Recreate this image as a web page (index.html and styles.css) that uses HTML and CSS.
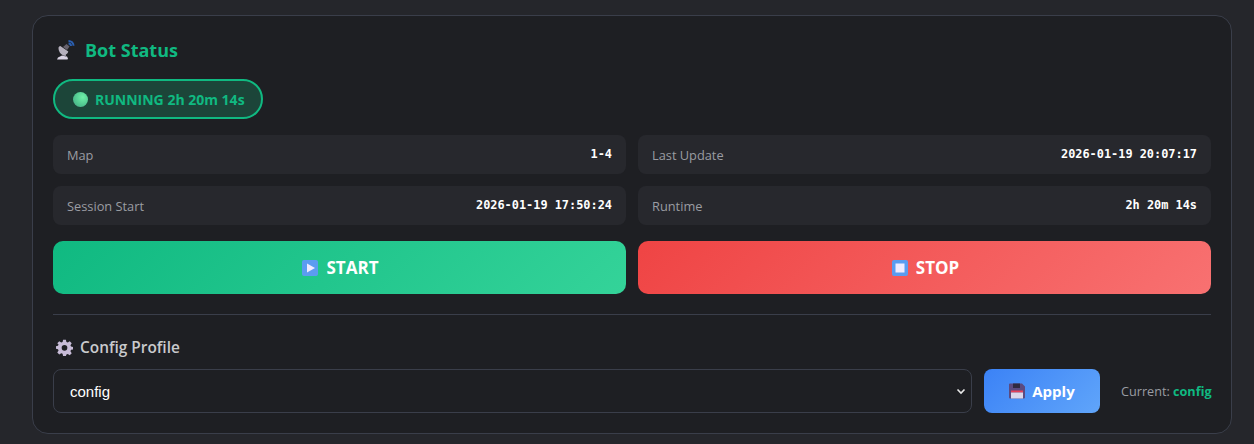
FILE: index.html
```html
<!DOCTYPE html>
<html lang="en">
<head>
<meta charset="utf-8">
<title>Bot Status</title>
<link rel="stylesheet" href="styles.css">
</head>
<body>
<main class="card">
  <h2 class="title">
    <svg class="title-icon" viewBox="0 0 20 20" width="20" height="20" aria-hidden="true">
      <path d="M1 19.500l1-2 4-2 5 1 1 2-.5 1z" fill="#d9d3e3"/>
      <path d="M6 15l2-3 2 1 0 4z" fill="#8f8a99"/>
      <path d="M2.500 8c0-1 .8-2 1.800-2l8 5.500c-.6 2.500-3 4-5 3.500-2.500-.5-4.800-3.500-4.800-7z" fill="#b5b0bd"/>
      <path d="M7 7l3.500-3 3 2.500-2.500 3.500z" fill="#66626e"/>
      <path d="M12.500 1c2.800 0 5 2 5 4.800M12.500 3.500c1.300 0 2.500 1 2.500 2.500" fill="none" stroke="#2b5fb0" stroke-width="2"/>
    </svg>
    <span>Bot Status</span>
  </h2>
  <div class="pill"><span class="dot"></span><span>RUNNING 2h 20m 14s</span></div>
  <div class="grid">
    <div class="stat"><span class="label">Map</span><span class="value">1-4</span></div>
    <div class="stat"><span class="label">Last Update</span><span class="value">2026-01-19 20:07:17</span></div>
    <div class="stat"><span class="label">Session Start</span><span class="value">2026-01-19 17:50:24</span></div>
    <div class="stat"><span class="label">Runtime</span><span class="value">2h 20m 14s</span></div>
  </div>
  <div class="actions">
    <button class="action start"><span class="key"><svg viewBox="0 0 16 16" width="16" height="16" aria-hidden="true"><path d="M5 3.500l8 4.500-8 4.500z" fill="#f0ebff"/></svg></span>START</button>
    <button class="action stop"><span class="key"><svg viewBox="0 0 16 16" width="16" height="16" aria-hidden="true"><rect x="3.500" y="3.500" width="9" height="9" fill="#f0ebff"/></svg></span>STOP</button>
  </div>
  <hr class="divider">
  <h3 class="profile-title">
    <svg viewBox="0 0 24 24" width="17" height="17" aria-hidden="true"><path fill="#c8bcd8" fill-rule="evenodd" d="M10 1h4l.7 3.200 1.900.8 2.800-1.800 2.800 2.800L20.400 8.800l.8 1.900 3 .6v3.400l-3 .6-.8 1.900 1.800 2.800-2.800 2.800-2.800-1.800-1.900.8L14 24h-4l-.7-3.200-1.900-.8-2.800 1.800-2.800-2.800 1.800-2.800-.8-1.900-3-.6v-3.400l3-.6.8-1.900L1.800 6 4.600 3.200 7.400 5l1.900-.8zM12 8.500a4 4 0 1 0 0 8 4 4 0 0 0 0-8z"/></svg>
    <span>Config Profile</span>
  </h3>
  <div class="profile-row">
    <div class="select"><span>config</span><svg viewBox="0 0 12 12" width="12" height="12" aria-hidden="true"><path d="M2.500 4.500L6 8l3.500-3.500" fill="none" stroke="#e8e8e8" stroke-width="1.600"/></svg></div>
    <button class="apply">
      <svg viewBox="0 0 16 16" width="16" height="16" aria-hidden="true"><path d="M0 1.500A1 1 0 0 1 1 .5h12l3 3v11a1 1 0 0 1-1 1H1a1 1 0 0 1-1-1z" fill="#5b4a80"/><rect x="4" y=".5" width="7" height="4.500" fill="#2f2a42"/><rect x="2" y="7.500" width="12" height="2" fill="#e8405a"/><rect x="2" y="9.500" width="12" height="6" fill="#dcd6ea"/></svg>
      <span>Apply</span>
    </button>
    <div class="current">Current: <strong>config</strong></div>
  </div>
</main>
</body>
</html>
```
FILE: styles.css
```css
* { box-sizing: border-box; }
html, body { height: 100%; }
body {
  margin: 0;
  padding: 15px 22px 0 32px;
  background: #25262b;
  font-family: "Open Sans", "Noto Sans", sans-serif;
  overflow: hidden;
}
.card {
  height: 419px;
  padding: 20px;
  background: #1e1f23;
  border: 1px solid #3a3e4a;
  border-radius: 16px;
}
.title {
  display: flex;
  align-items: center;
  gap: 9px;
  height: 28px;
  margin: 0 0 15px 3px;
  color: #10b981;
  font-size: 18px;
  font-weight: 700;
}
.pill {
  display: inline-flex;
  align-items: center;
  gap: 7px;
  width: 210px;
  height: 40px;
  padding: 0 0 0 18px;
  background: #1c4539;
  border: 2px solid #10b981;
  border-radius: 20px;
  color: #10b981;
  font-size: 14px;
  font-weight: 700;
  white-space: nowrap;
  vertical-align: top;
}
.dot {
  flex: none;
  width: 15px;
  height: 15px;
  border-radius: 50%;
  background: radial-gradient(circle at 65% 35%, #6ff0a8, #4fc48f 60%, #4a9d85);
}
.grid {
  display: grid;
  grid-template-columns: 1fr 1fr;
  gap: 12px;
  margin-top: 16px;
}
.stat {
  display: flex;
  justify-content: space-between;
  align-items: center;
  height: 39px;
  padding: 0 14px;
  background: #27282d;
  border-radius: 8px;
}
.label { color: #9a9ca2; font-size: 12.800px; }
.value {
  position: relative;
  top: -1px;
  color: #fff;
  font-family: "DejaVu Sans Mono", "Liberation Mono", monospace;
  font-size: 11.900px;
  font-weight: 700;
}
.actions {
  display: grid;
  grid-template-columns: 1fr 1fr;
  gap: 12px;
  margin-top: 16px;
}
.action {
  display: flex;
  align-items: center;
  justify-content: center;
  gap: 8px;
  height: 53px;
  padding: 0 0 0 2px;
  border: 0;
  border-radius: 10px;
  color: #fff;
  font-family: "Open Sans", sans-serif;
  font-size: 17px;
  font-weight: 700;
}
.start { background: linear-gradient(135deg, #10b981, #34d399); }
.stop { background: linear-gradient(135deg, #ef4444, #f87171); }
.key {
  display: block;
  width: 16px;
  height: 16px;
  background: #5b9cf0;
  border-radius: 2px;
}
.key svg { display: block; }
.divider {
  height: 1px;
  margin: 20px 0 0;
  border: 0;
  background: #3a3e4a;
}
.profile-title {
  display: flex;
  align-items: center;
  gap: 7px;
  height: 20px;
  margin: 22px 0 12px 3px;
  color: #c9cacd;
  font-size: 15.400px;
  font-weight: 600;
}
.profile-row {
  display: flex;
  align-items: center;
  gap: 12px;
}
.select {
  display: flex;
  flex: 1;
  align-items: center;
  justify-content: space-between;
  height: 44px;
  padding: 0 4px 0 16px;
  background: #1e1f23;
  border: 1px solid #3a3e4a;
  border-radius: 8px;
  color: #fff;
  font-family: "Liberation Sans", sans-serif;
  font-size: 15px;
}
.apply {
  display: flex;
  align-items: center;
  justify-content: center;
  gap: 7px;
  width: 116px;
  height: 44px;
  border: 0;
  border-radius: 8px;
  background: linear-gradient(135deg, #3b82f6, #60a5fa);
  color: #fff;
  font-family: "Open Sans", sans-serif;
  font-size: 15px;
  font-weight: 700;
}
.current {
  flex: none;
  width: 90px;
  margin-left: 9px;
  color: #9a9ca2;
  font-size: 12.650px;
  text-align: right;
  white-space: nowrap;
}
.current strong { color: #10b981; }
```
